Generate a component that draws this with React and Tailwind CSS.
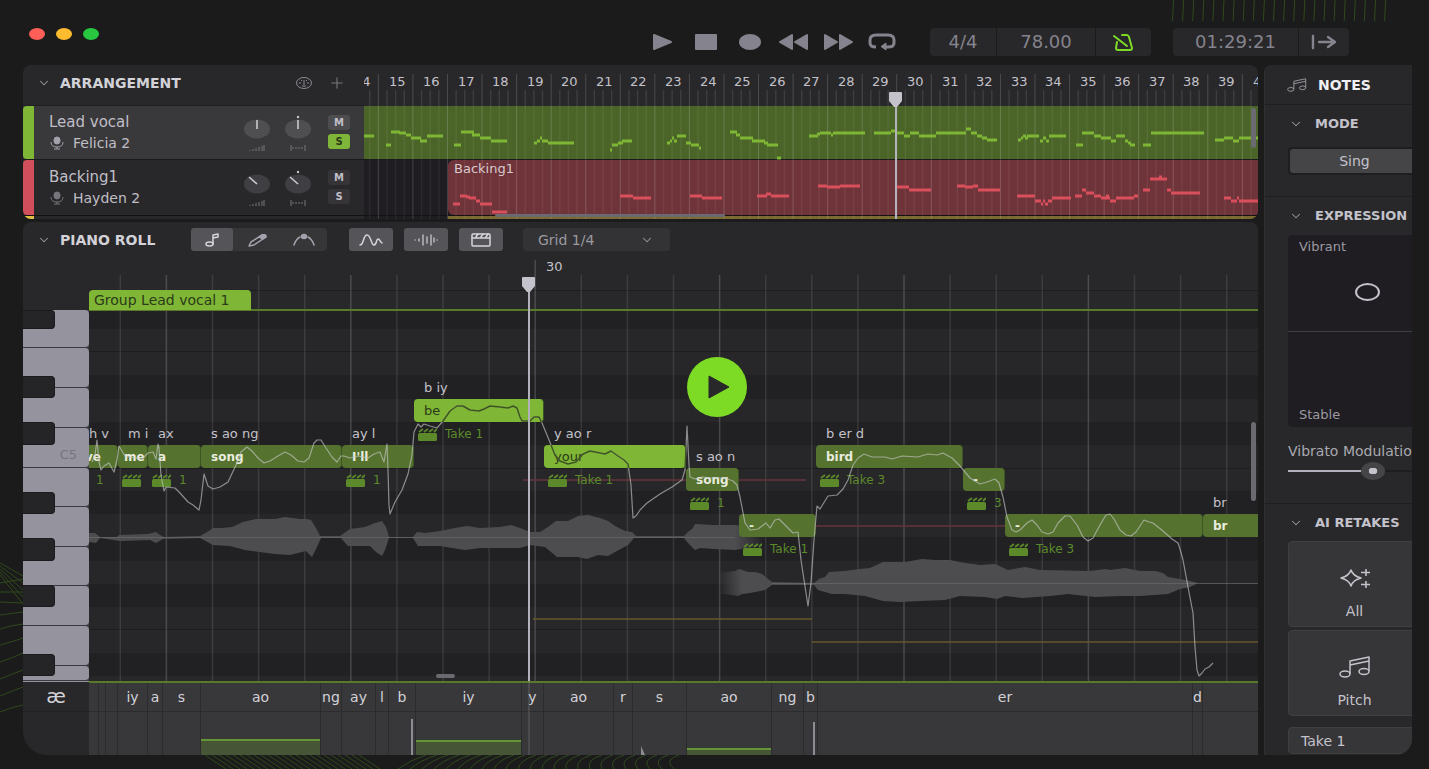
import { ChevronDown, Plus } from 'lucide-react'

const BARS = Array.from({ length: 27 }, (_, i) => 14 + i)
const BAR_WIDTH = 34.56
const BEAT_WIDTH = 46.1

const TRACKS = [
  { name: 'Lead vocal', singer: 'Felicia 2', color: 'bg-[#7fb635]', row: 'bg-[#39393b] h-[53px]', mic: '#a3a1ac', knob: '#4f4f52', dial: 0, solo: true },
  { name: 'Backing1', singer: 'Hayden 2', color: 'bg-[#d14f5c]', row: 'bg-[#28282a] h-[55px]', mic: '#77767c', knob: '#3f3e42', dial: -45, solo: false },
]

// [x from, x to, y]
const LEAD = [
  [364, 374, 136], [386, 391, 145], [391, 400, 132], [399, 406, 133], [406, 411, 135], [411, 421, 138], [420, 427, 141], [427, 443, 136],
  [454, 461, 145], [461, 474, 132], [472, 480, 135], [480, 491, 138], [491, 507, 141],
  [534, 537, 143], [537, 540, 141], [540, 542, 138], [542, 548, 141], [548, 574, 143],
  [610, 612, 150], [612, 618, 145], [618, 623, 143], [622, 632, 141],
  [667, 670, 143], [670, 672, 141], [672, 674, 138], [674, 677, 141], [677, 686, 136], [686, 691, 143], [691, 699, 145], [699, 701, 148],
  [730, 737, 132], [736, 740, 135], [740, 753, 138], [752, 765, 141], [764, 768, 143], [767, 778, 145], [777, 781, 158],
  [809, 818, 136], [817, 820, 134], [820, 831, 133], [831, 833, 135], [833, 865, 133],
  [874, 891, 133], [891, 896, 131], [896, 904, 133], [904, 910, 136], [910, 919, 133], [919, 936, 136], [936, 966, 133], [966, 971, 129], [971, 977, 133], [977, 982, 136], [982, 987, 138], [987, 997, 140],
  [1018, 1021, 140], [1021, 1023, 138], [1023, 1026, 136], [1025, 1028, 138], [1027, 1039, 136], [1040, 1043, 141], [1043, 1046, 138], [1046, 1049, 141], [1049, 1066, 136],
  [1076, 1083, 145], [1082, 1094, 133], [1094, 1101, 136], [1101, 1111, 138], [1111, 1116, 141], [1116, 1125, 136], [1125, 1128, 141], [1128, 1131, 143], [1130, 1135, 145],
  [1143, 1151, 145], [1151, 1204, 133], [1215, 1224, 140], [1224, 1233, 138], [1233, 1239, 141], [1239, 1260, 138],
]

const BACKING = [
  [453, 460, 204], [460, 467, 196], [466, 470, 197], [469, 476, 198], [476, 480, 201], [480, 492, 204], [492, 507, 212],
  [620, 633, 196], [633, 651, 198], [690, 702, 196], [702, 722, 198], [757, 767, 196], [766, 771, 194], [771, 789, 196],
  [818, 827, 186], [827, 840, 187], [840, 860, 186], [897, 909, 187], [909, 931, 190],
  [957, 965, 186], [965, 973, 187], [973, 978, 186], [978, 1000, 190],
  [1017, 1035, 196], [1035, 1041, 201], [1041, 1043, 204], [1043, 1045, 201], [1045, 1048, 204], [1048, 1052, 201], [1052, 1071, 198],
  [1075, 1082, 196], [1082, 1086, 190], [1086, 1094, 193], [1094, 1101, 196], [1101, 1110, 198], [1106, 1109, 196], [1110, 1116, 201], [1116, 1134, 198], [1134, 1138, 196],
  [1143, 1150, 190], [1150, 1167, 179], [1159, 1162, 177], [1167, 1171, 190], [1171, 1200, 193],
  [1224, 1231, 198], [1231, 1237, 201], [1237, 1239, 198], [1239, 1260, 201],
]

const segments = (list) => list.map(([a, b, y]) => `M${a} ${y}H${b}`).join('')

const NOTES = [
  { x: 0, y: 188, w: 29, word: 've', phones: 'h v', take: '1', edge: true },
  { x: 29, y: 188, w: 30, word: 'me', phones: 'm i', take: '' },
  { x: 59, y: 188, w: 53, word: 'a', phones: 'ax', take: '1' },
  { x: 112, y: 188, w: 141, word: 'song', phones: 's ao ng' },
  { x: 253, y: 188, w: 72, word: "I'll", phones: 'ay l', take: '1' },
  { x: 325, y: 142, w: 130, word: 'be', phones: 'b iy', take: 'Take 1', bright: true },
  { x: 455, y: 188, w: 142, word: 'your', phones: 'y ao r', take: 'Take 1', bright: true },
  { x: 597, y: 211, w: 53, word: 'song', phones: 's ao n', take: '1' },
  { x: 650, y: 257, w: 77, word: '-', phones: '', take: 'Take 1' },
  { x: 727, y: 188, w: 147, word: 'bird', phones: 'b er d', take: 'Take 3' },
  { x: 874, y: 211, w: 42, word: '-', phones: '', take: '3' },
  { x: 916, y: 257, w: 198, word: '-', phones: '', take: 'Take 3' },
  { x: 1114, y: 257, w: 60, word: 'br', phones: 'br' },
]

// phoneme cells: [width, label, level]
const PHONEMES = [
  [10, ''], [7, ''], [12, ''], [30, 'iy'], [15, 'a'], [38, 's'], [120, 'ao', 16], [21, 'ng'], [34, 'ay'], [13, 'l'], [27, 'b'],
  [106, 'iy', 15], [22, 'y'], [70, 'ao'], [19, 'r'], [54, 's'], [85, 'ao', 7], [32, 'ng'], [14, 'b'], [375, 'er'], [10, 'd'],
]

const BLACK_ROWS = [[310, 19], [375, 24], [422, 23], [491, 23], [537, 24], [584, 23], [653, 23]]
const WHITE_KEYS = [38, 40, 40, 40, 39, 40, 39, 40, 40, 15]
const BLACK_KEYS = [[0, 19], [66, 22], [112, 23], [182, 22], [228, 23], [275, 22], [344, 22]]

const PITCH =
  'M92 462L95 455 97 440 99 462 101 470 104 466 109 463 114 472 117 460 119 446 122 451 125 456 135 458 143 458 148 453 153 452 156 459 158 444 159 448 161 475 164 491 166 487 175 488 180 493 188 502 193 505 199 510 201 500 204 474 208 486 213 489 220 487 228 482 236 465 241 452 247 447 252 451 258 458 264 463 270 461 278 456 285 452 291 455 298 461 304 462 309 458 314 443 317 440 321 440 326 448 332 457 337 462 341 456 344 456 350 458 358 456 368 458 374 454 380 452 384 462 387 444 388 470 389 505 390 514 395 502 402 490 408 474 412 455 414 432 418 424 421 427 424 424 430 426 437 428 443 421 450 411 457 406 463 406 470 410 479 411 484 409 490 406 500 407 508 408 513 406 517 408 520 417 522 421 530 421 534 417 539 417 542 423 547 435 555 455 560 461 568 464 576 462 583 454 590 451 600 453 605 454 611 451 618 456 624 460 628 464 631 485 633 518 636 516 640 510 647 503 660 494 672 487 682 480 685 470 687 426 689 465 690 477 695 479 702 477 712 478 725 478 733 481 737 485 740 497 745 523 750 530 758 529 766 523 770 528 775 520 779 519 785 525 793 533 798 532 801 560 808 606 811 583 814 540 817 506 820 509 828 496 837 495 843 489 848 480 853 465 858 458 864 454 872 457 885 457 892 459 902 456 918 457 928 454 937 455 943 453 952 458 960 466 970 478 980 484 987 482 995 479 999 483 1003 497 1007 517 1012 530 1016 532 1020 530 1027 523 1032 520 1037 525 1042 532 1048 534 1053 532 1058 523 1065 516 1070 516 1077 525 1083 537 1088 541 1093 538 1100 525 1106 515 1110 514 1114 519 1120 530 1126 535 1131 536 1136 532 1144 520 1149 522 1153 523 1163 531 1172 539 1178 543 1180 549 1183 560 1188 587 1193 613 1195 647 1197 670 1199 676 1202 673 1205 669 1209 667 1213 663'

const WAVE_A =
  'M89 533L95 533 100 537 117 537 119 535 148 534 156 532 160 535 164 537 200 536 209 531 213 528 222 528 232 527 243 522 256 519 275 519 285 517 300 519 306 519 311 520 316 528 320 536 340 536 350 529 365 527 375 523 382 521 386 527 389 537 413 537 417 532 425 533 440 531 455 528 467 526 480 528 500 527 511 525 520 528 530 532 540 532 548 527 556 521 568 521 578 516 588 515 600 518 608 521 615 526 625 531 632 532 636 536 684 536 688 532 693 528 695 524 712 525 735 525 764 528 764 545 735 550 715 549 700 548 695 550 688 543 684 538 634 538 628 545 615 552 608 556 598 555 587 559 578 557 557 557 545 547 530 545 520 548 480 548 465 550 440 546 418 546 413 538 389 538 385 550 382 556 376 552 370 546 348 546 341 538 321 538 316 549 312 557 306 551 290 555 275 554 245 550 230 546 213 545 200 538 163 539 156 543 150 540 120 541 100 538 96 543 89 542Z'
const WAVE_B =
  'M718 573L735 571 739 569 748 572 755 572 762 574 768 579 772 582 814 583 819 579 825 577 829 572 845 571 860 569 870 568 883 562 905 562 922 559 935 560 950 560 965 563 980 565 995 564 1008 570 1025 567 1040 570 1090 571 1106 569 1110 570 1125 568 1140 571 1155 571 1163 573 1168 577 1180 579 1190 581 1198 583 1190 587 1180 589 1168 594 1140 596 1120 596 1095 597 1068 594 1050 596 1022 598 1005 596 997 599 985 597 960 596 945 600 920 601 900 602 883 601 865 596 845 594 832 594 825 592 818 590 814 585 772 585 765 590 750 593 742 594 738 596 725 594 718 594Z'

function Backdrop() {
  return (
    <svg className="pointer-events-none absolute bottom-0 left-0 h-[769px] w-[1429px]" viewBox="0 0 1429 769" fill="none" stroke="#2f4a1b" aria-hidden="true">
      {Array.from({ length: 22 }, (_, i) => (
        <path key={i} d={`M${1173.5 + i * 10.1} 0L${1172.5 + i * 10.1} 21`} />
      ))}
      {[563, 566, 569, 572, 575].map((y, i) => (
        <path key={y} d={`M0 ${y}L23 ${576 + i * 7}`} />
      ))}
      <path d="M0 583L23 579M0 592H23M0 602L23 603M0 615L23 612M0 629Q12 625 23 624M0 645Q12 642 23 638M0 662Q12 658 23 653M0 679Q12 674 23 670M0 696Q12 691 23 687M0 712Q12 707 23 705" />
      {Array.from({ length: 23 }, (_, i) => (
        <path key={i} d={`M${205 + i * 7} 755L${226 + i * 7} 769`} />
      ))}
      {Array.from({ length: 24 }, (_, i) => (
        <path key={i} d={`M${426 + i * 11} 755Q${410 + i * 11} 760 ${398 + i * 12} 769`} />
      ))}
    </svg>
  )
}

function TransportButton({ label, children }) {
  return (
    <button aria-label={label} className="flex h-7 w-11 items-center justify-center">
      <svg viewBox="0 0 30 18" className="h-[18px] w-[30px] text-[#85838d]" fill="currentColor" stroke="currentColor" strokeWidth="2" strokeLinejoin="round">
        {children}
      </svg>
    </button>
  )
}

function TopBar() {
  return (
    <header className="flex h-[65px] items-start pr-20 pl-[29px]">
      <div className="flex gap-[11px] pt-7">
        <span className="h-3 w-4 rounded-[50%] bg-[#ff5f57]" />
        <span className="h-3 w-4 rounded-[50%] bg-[#febc2e]" />
        <span className="h-3 w-4 rounded-[50%] bg-[#28c840]" />
      </div>
      <div className="ml-auto flex items-center pt-7">
        <TransportButton label="Play"><path d="M7 2v14l17-7z" /></TransportButton>
        <TransportButton label="Stop"><rect x="5" y="2" width="20" height="14" /></TransportButton>
        <TransportButton label="Record"><ellipse cx="15" cy="9" rx="10" ry="7" /></TransportButton>
        <TransportButton label="Rewind"><path d="M13 2v14L1 9zM28 2v14L16 9z" /></TransportButton>
        <TransportButton label="Fast forward"><path d="M2 2v14l12-7zM17 2v14l12-7z" /></TransportButton>
        <TransportButton label="Loop">
          <path d="M9 14Q3 14 3 10V7q0-5 6-5h12q6 0 6 5v3q0 4-6 4h-2" fill="none" strokeWidth="3" />
          <path d="M14 13.500l5-3.500v7z" strokeWidth="1" />
        </TransportButton>
        <div className="ml-[26px] flex h-7 divide-x divide-[#1b1b1b] overflow-hidden rounded bg-[#28282a] text-lg text-[#85838d]">
          <span className="flex w-[67px] items-center justify-center">4/4</span>
          <span className="flex w-[99px] items-center justify-center">78.00</span>
          <button aria-label="Metronome" className="flex w-[55px] items-center justify-center">
            <svg viewBox="0 0 21 17" className="h-[17px] w-[21px]" fill="none" stroke="#7ddb26" strokeWidth="2" strokeLinejoin="round" strokeLinecap="round">
              <path d="M9 1h5q1 0 2 2l3 11q0 2-2 2H5q-2 0-2-2l1-6M1 2l13 10" />
            </svg>
          </button>
        </div>
        <div className="ml-[22px] flex h-7 divide-x divide-[#1b1b1b] overflow-hidden rounded bg-[#28282a] text-lg text-[#85838d]">
          <span className="flex w-[126px] items-center justify-center">01:29:21</span>
          <button aria-label="Go to end" className="flex w-[50px] items-center justify-center">
            <svg viewBox="0 0 26 16" className="h-4 w-[26px]" fill="none" stroke="currentColor" strokeWidth="2.4" strokeLinecap="round" strokeLinejoin="round">
              <path d="M2 2v12M8 8h16M17 3l7 5-7 5" />
            </svg>
          </button>
        </div>
      </div>
    </header>
  )
}

function Chevron() {
  return (
    <ChevronDown className="h-3.5 w-3.5 shrink-0 text-[#9b9aa1]" strokeWidth={1.75} />
  )
}

function Playhead({ className }) {
  return (
    <div className={`pointer-events-none absolute flex w-[13px] flex-col items-center ${className}`}>
      <svg viewBox="0 0 13 15" className="h-[15px] w-[13px] shrink-0" fill="#c4c2cb">
        <path d="M1 0h11q1 0 1 1v8l-5 6H5L0 9V1q0-1 1-1z" />
      </svg>
      <span className="w-0.5 flex-1 bg-[#b3b1bb]" />
    </div>
  )
}

function Knob({ track, dotted }) {
  return (
    <svg viewBox="0 0 28 38" className="h-[38px] w-7" fill="none">
      <ellipse cx="14" cy="15" rx="13" ry="9.5" fill={track.knob} />
      <path d={track.dial ? 'M6 8l8 7' : 'M14 6v9'} stroke="#c9c8cf" strokeWidth="1.6" />
      {dotted && <circle cx="14" cy="3" r="1.2" fill="#c9c8cf" />}
      {dotted ? (
        <path d="M7 31v6M9 33v2M12 33v2M15 33v2M18 33v2M21 31v6" stroke="#77767c" />
      ) : (
        <path d="M7 36v1M10 35v2M13 34v3M16 33v4M19 32v5M21 31v6" stroke="#77767c" />
      )}
    </svg>
  )
}

function TrackRow({ track }) {
  return (
    <div className={`flex items-center ${track.row}`}>
      <span className={`w-[11px] shrink-0 self-stretch rounded-l ${track.color}`} />
      <div className="flex-1 pb-0.5 pl-[15px] text-[#c0bec7]">
        <p className="text-[15px] leading-[22px]">{track.name}</p>
        <p className="flex items-center gap-2 text-sm leading-5">
          <svg viewBox="0 0 16 14" className="h-3.5 w-4" fill={track.mic} stroke={track.mic}>
            <rect x="5" y="1" width="6" height="7" rx="3" />
            <path d="M2 6q0 5 6 5t6-5M8 11v2M5 13h6" fill="none" />
          </svg>
          {track.singer}
        </p>
      </div>
      <div className="flex gap-[13px]">
        <Knob track={track} />
        <Knob track={track} dotted />
      </div>
      <div className="flex flex-col gap-1 pr-3.5 pb-0.5 pl-4 text-[10px] leading-[15px] font-bold text-[#c0bec7]">
        <button className={`h-[15px] w-[22px] rounded-[3px] ${track.solo ? 'bg-[#4d4d50]' : 'bg-[#363437]'}`}>M</button>
        <button className={`h-[15px] w-[22px] rounded-[3px] ${track.solo ? 'bg-[#7fb63a] text-[#2b3a18]' : 'bg-[#363437]'}`}>S</button>
      </div>
    </div>
  )
}

function Arrangement() {
  return (
    <section className="flex overflow-hidden rounded-lg bg-[#28282a]">
      <div className="w-[341px] shrink-0">
        <div className="flex h-[41px] items-center border-b border-[#1e1e20] pr-[18px] pb-1 pl-3.5">
          <Chevron />
          <h2 className="ml-[9px] text-sm font-bold text-[#d3d2d8]">ARRANGEMENT</h2>
          <button aria-label="Meter" className="ml-auto">
            <svg viewBox="0 0 18 14" className="h-3.5 w-[18px]" fill="none" stroke="#8b8a91">
              <ellipse cx="9" cy="7" rx="7.5" ry="5.5" />
              <path d="M9 4v5M7 10h4M4 7h2M12 7h2M6 4l1 1M12 4l-1 1" />
            </svg>
          </button>
          <button aria-label="Add track" className="ml-[15px]">
            <Plus className="h-[18px] w-[18px] text-[#77767c]" strokeWidth={1.5} />
          </button>
        </div>
        <TrackRow track={TRACKS[0]} />
        <div className="border-t border-[#1a1a1c]">
          <TrackRow track={TRACKS[1]} />
        </div>
        <div className="h-1 border-t border-[#111]">
          <div className="h-[3px] w-[11px] rounded-l bg-[#e0c040]" />
        </div>
      </div>

      <div className="relative min-w-0 flex-1 overflow-hidden">
        <div className="relative h-[41px] text-[13px] text-[#c4c2cb]">
          {BARS.map((bar, i) => (
            <span key={bar} className="absolute top-[7px] leading-5" style={{ left: Math.round(-10 + i * BAR_WIDTH) }}>
              {bar}
            </span>
          ))}
        </div>
        <div className="h-[53px] bg-[#4b6529]" />
        <div className="flex h-[56px] border-t border-[#1a1a1c] bg-[#1f1c22] pl-[84px]">
          <div className="flex-1 rounded-l-md bg-[#6f343a] px-1.5 text-[13px] leading-[18px] text-[#d9c9cd]">Backing1</div>
        </div>
        <div className="flex h-1 border-t border-[#111] bg-[#1f1c22] pl-[84px]">
          <div className="flex-1 bg-[#7a6930]" />
        </div>
        <svg className="pointer-events-none absolute top-0 left-0 h-[154px] w-[895px]" viewBox="364 65 895 154" fill="none" aria-hidden="true">
          {BARS.map((bar, i) => {
            const x = 343.8 + i * BAR_WIDTH
            return (
              <g key={bar} stroke="#fff">
                <path d={`M${x} 74V219`} strokeOpacity="0.17" />
                {[1, 2, 3].map((n) => (
                  <path key={n} d={`M${x + n * 8.64} 90V106`} strokeOpacity="0.1" strokeWidth="1.4" />
                ))}
                {[1, 2, 3].map((n) => (
                  <path key={n} d={`M${x + n * 8.64} 106V219`} strokeOpacity="0.06" strokeWidth="1.4" />
                ))}
              </g>
            )
          })}
          <path d={segments(LEAD)} stroke="#7fb635" strokeWidth="2.8" />
          <path d={segments(BACKING)} stroke="#d94f5c" strokeWidth="2.8" />
        </svg>
        <span className="absolute bottom-0.5 left-[131px] h-[3px] w-[230px] rounded bg-[#6b6a70]" />
        <span className="absolute top-[43px] right-0.5 h-10 w-[5px] rounded bg-[#6b6a70]" />
        <Playhead className="top-[27px] bottom-0 left-[525px]" />
      </div>
    </section>
  )
}

function ToolButton({ label, active, wide, children }) {
  return (
    <button aria-label={label} className={`flex h-[23px] items-center justify-center rounded-[3px] ${wide} ${active ? 'bg-[#555458]' : ''}`}>
      <svg viewBox="0 0 26 16" className="h-4 w-[26px]" fill="none" stroke="#d6d5db" strokeWidth="1.5" strokeLinecap="round" strokeLinejoin="round">
        {children}
      </svg>
    </button>
  )
}

function PianoToolbar() {
  return (
    <div className="flex h-[35px] items-center pl-3.5">
      <Chevron />
      <h2 className="ml-[9px] w-[131px] text-sm font-bold text-[#d3d2d8]">PIANO ROLL</h2>
      <div className="flex rounded bg-[#363638]">
        <ToolButton label="Notes tool" active wide="w-[42px]">
          <path d="M14 12V3l5-1v3l-5 1" />
          <ellipse cx="10.500" cy="12" rx="3.500" ry="2" />
        </ToolButton>
        <ToolButton label="Pencil tool" wide="w-[47px]">
          <path d="M5 14l2-4L18 3q4-1 4 2L10 13z" stroke="#a3a1ac" />
          <path d="M15 5l3-2q4-1 4 2l-3 2z" fill="#a3a1ac" stroke="#a3a1ac" />
        </ToolButton>
        <ToolButton label="Curve tool" wide="w-[47px]">
          <path d="M3 13q2-6 6-8M17 5q4 2 6 8" stroke="#a3a1ac" />
          <ellipse cx="13" cy="4.500" rx="2.500" ry="2" fill="#a3a1ac" stroke="#a3a1ac" />
        </ToolButton>
      </div>
      <div className="ml-[22px] flex gap-[11px]">
        <ToolButton label="Pitch" active wide="w-11">
          <path d="M2 13C6 13 5 3 9 3s4 10 7 10 2-6 4-6 2 3 4 4" />
        </ToolButton>
        <ToolButton label="Waveform" active wide="w-11">
          <path d="M2 8h.1M6 7v2M10 3v10M14 5v6M18 3v10M21 6v4M24 8h.1" stroke="#b8b7be" />
        </ToolButton>
        <ToolButton label="Takes" active wide="w-11">
          <rect x="4" y="2" width="18" height="12" rx="1" />
          <path d="M4 6h18M8 5l2-3M13 5l2-3M18 5l2-3" />
        </ToolButton>
      </div>
      <label className="relative ml-5 flex h-[23px] w-[147px] items-center rounded bg-[#333335] text-sm text-[#9b9aa1]">
        <select aria-label="Grid" className="h-full w-full appearance-none bg-transparent pl-[15px] outline-none">
          <option>Grid 1/4</option>
        </select>
        <span className="pointer-events-none absolute right-4"><Chevron /></span>
      </label>
    </div>
  )
}

function Clapper() {
  return (
    <svg viewBox="0 0 19 13" className="h-[13px] w-[19px] shrink-0" aria-hidden="true">
      <rect x="0" y="5" width="19" height="8" rx="1.500" fill="#5c8a2b" />
      <path d="M1 4l4-3M6 4l4-3M11 4l4-3M16 4l3-3" stroke="#5c8a2b" strokeWidth="1.800" />
    </svg>
  )
}

function Note({ note }) {
  return (
    <div className="absolute" style={{ left: note.x, top: note.y, width: note.w }}>
      <span className={`absolute -top-[21px] text-[13px] leading-5 whitespace-nowrap text-[#c4c2cb] ${note.edge ? 'left-0' : 'left-2.5'}`}>{note.phones}</span>
      <div
        className={`flex h-[23px] items-center rounded border-r border-[#3d5522] text-xs ${note.edge ? '-ml-1' : note.w === 30 ? 'pl-1.5' : 'pl-2.5'} ${
          note.bright ? 'bg-[#7fb635] text-[13px] text-[#2b3a18]' : 'bg-[#55732e] font-bold text-[#e9ecdf]'
        }`}
      >
        {note.word}
      </div>
      {note.take !== undefined && (
        <div className={`absolute top-[25px] flex min-h-5 items-center gap-2 text-xs leading-5 whitespace-nowrap text-[#5c8a2b] ${note.edge ? 'left-[7px]' : 'left-1'}`}>
          {!note.edge && <Clapper />}
          {note.take}
        </div>
      )}
    </div>
  )
}

function Keyboard() {
  return (
    <div className="relative mt-[53px] h-[371px] w-[66px] shrink-0 overflow-hidden bg-[#3a393e]">
      {WHITE_KEYS.map((h, i) => (
        <div key={i} className="flex items-end justify-end rounded-r border-b border-[#3a393e] bg-[#95939e] pr-3 text-[13px] leading-6 text-[#77757f]" style={{ height: h }}>
          {i === 3 && 'C5'}
        </div>
      ))}
      {BLACK_KEYS.map(([top, h]) => (
        <span key={top} className="absolute left-0 w-8 rounded-r border-y border-r border-[#1b1b1d] bg-[#252527]" style={{ top, height: h }} />
      ))}
    </div>
  )
}

function RollCanvas() {
  return (
    <div className="relative h-[424px] min-w-0 flex-1 overflow-hidden">
      <svg className="absolute top-0 left-0 h-[424px] w-[1170px]" viewBox="89 257 1170 424" fill="none" aria-hidden="true">
        <rect x="89" y="310" width="1170" height="371" fill="#272729" />
        {BLACK_ROWS.map(([y, h]) => (
          <rect key={y} x="89" y={y} width="1170" height={h} fill="#212123" />
        ))}
        <path d="M89 290.500H1259M89 351.500H1259M89 468.500H1259M89 629.500H1259" stroke="#1d1d1f" />
        {Array.from({ length: 25 }, (_, i) => (
          <path key={i} d={`M${120.3 + i * BEAT_WIDTH} ${i === 9 ? 260 : 275}V681`} stroke="#fff" strokeOpacity={i % 4 === 1 ? 0.17 : 0.1} strokeWidth="1.500" />
        ))}
        <defs>
          <linearGradient id="fade-out" gradientUnits="userSpaceOnUse" x1="735" x2="764" y1="0" y2="0">
            <stop stopColor="#4d4d4f" />
            <stop offset="1" stopColor="#4d4d4f" stopOpacity="0" />
          </linearGradient>
          <linearGradient id="fade-in" gradientUnits="userSpaceOnUse" x1="718" x2="742" y1="0" y2="0">
            <stop stopColor="#4d4d4f" stopOpacity="0" />
            <stop offset="1" stopColor="#4d4d4f" />
          </linearGradient>
        </defs>
        <path d={WAVE_A} fill="url(#fade-out)" />
        <path d={WAVE_B} fill="url(#fade-in)" />
        <path d="M89 537.500H735M772 583.500H1259" stroke="#69696c" strokeOpacity="0.7" />
        <path d="M523 480H806M816 526H1005" stroke="#66343b" strokeWidth="1.500" />
        <path d="M533 619H812M812 642H1259" stroke="#655828" strokeWidth="1.500" />
        <path d="M89 310H1259" stroke="#587a2a" strokeWidth="2" />
      </svg>
      <div className="absolute top-[33px] left-0 flex h-5 w-[162px] items-center rounded-t bg-[#7fb635] pl-[5px] text-sm whitespace-nowrap text-[#2b3a18]">
        Group Lead vocal 1
      </div>
      <span className="absolute top-0 left-[457px] text-[13px] leading-5 text-[#c4c2cb]">30</span>
      {NOTES.map((note) => (
        <Note key={note.x} note={note} />
      ))}
      <svg className="pointer-events-none absolute top-0 left-0 h-[424px] w-[1170px]" viewBox="89 257 1170 424" fill="none" strokeLinejoin="round" aria-hidden="true">
        <clipPath id="selected-notes">
          <rect x="414" y="399" width="130" height="23" />
          <rect x="544" y="445" width="142" height="23" />
        </clipPath>
        <path d={PITCH} stroke="#c4c4c6" strokeOpacity="0.65" strokeWidth="1.200" />
        <path d={PITCH} stroke="#3b5420" strokeWidth="1.500" clipPath="url(#selected-notes)" />
      </svg>
      <span className="absolute bottom-[3px] left-[347px] h-1 w-[19px] rounded bg-[#6b6a70]" />
      <span className="absolute top-[165px] right-0.5 h-[79px] w-[5px] rounded bg-[#6b6a70]" />
      <Playhead className="top-5 bottom-0 left-[433px]" />
    </div>
  )
}

function Phonemes() {
  return (
    <div className="relative flex h-[74px]">
      <div className="w-[66px] shrink-0 border-t border-[#95939e] text-center text-xl text-[#d3d2d8]">
        <div className="h-[30px] border-b border-[#212123] leading-7">æ</div>
      </div>
      <div className="relative flex min-w-0 flex-1 overflow-hidden border-t-2 border-[#587a2a] bg-[#38383a] text-sm text-[#d3d2d8]">
        {PHONEMES.map(([width, label, level], i) => (
          <div key={i} className="flex shrink-0 flex-col border-r border-[#2c2c2e]" style={{ width }}>
            <span className="flex h-[29px] items-center justify-center border-b border-[#2c2c2e]">{label}</span>
            {level && <span className="mt-auto border-t-2 border-[#649636] bg-[#475537]" style={{ height: level }} />}
          </div>
        ))}
        <div className="flex-1"><span className="block h-[29px] border-b border-[#2c2c2e]" /></div>
        <svg className="pointer-events-none absolute bottom-0 left-0 h-[37px] w-[760px]" viewBox="89 718 760 37" fill="#8d8c93" aria-hidden="true">
          <path d="M411 719h2v36h-2zM813 722h2v33h-2zM641 755v-9l4 9z" />
        </svg>
      </div>
      <span className="absolute top-0 bottom-0 left-[505px] w-0.5 bg-white/10" />
    </div>
  )
}

function MusicIcon({ className }) {
  return (
    <svg viewBox="0 0 32 22" className={className} fill="none" stroke="currentColor" strokeWidth="1.500" strokeLinejoin="round">
      <ellipse cx="6" cy="18" rx="5" ry="3" />
      <ellipse cx="25" cy="15.500" rx="5" ry="3" />
      <path d="M11 18V5l19-4v14M11 9l19-4" />
    </svg>
  )
}

function PanelTitle({ children }) {
  return (
    <h3 className="flex items-center gap-3 pl-px text-[13px] leading-5 font-bold text-[#c4c2cb]">
      <Chevron />
      {children}
    </h3>
  )
}

function NotesPanel() {
  return (
    <aside className="w-[148px] shrink-0 overflow-hidden rounded-tl-lg rounded-br-2xl border-l border-[#303032] bg-[#28282a] whitespace-nowrap">
      <div className="w-[156px]">
        <div className="flex h-10 items-center gap-[11px] border-b border-[#1e1e20] pl-[22px] text-[#9b9aa1]">
          <MusicIcon className="h-[14px] w-[20px]" />
          <h2 className="text-sm font-bold text-[#f0eff3]">NOTES</h2>
        </div>
        <div className="h-[92px] border-b border-[#1e1e20] pt-[9px] pl-[23px]">
          <PanelTitle>MODE</PanelTitle>
          <div className="mt-[13px] rounded bg-[#1e1e20] p-0.5">
            <button className="h-6 w-full rounded-[3px] bg-[#454547] text-sm text-[#c4c2cb]">Sing</button>
          </div>
        </div>
        <div className="h-[307px] border-b border-[#1e1e20] pt-[9px] pl-[23px]">
          <PanelTitle>EXPRESSION</PanelTitle>
          <div className="relative mt-[9px] flex h-48 flex-col rounded bg-[#1f1c22] text-[13px] leading-5 text-[#9b9aa1]">
            <span className="h-[97px] border-b border-[#3f3e42] pt-0.5 pl-[11px]">Vibrant</span>
            <span className="mt-auto pb-0.5 pl-[11px]">Stable</span>
            <button aria-label="Expression" className="absolute top-12 left-[67px] h-[18px] w-[25px] rounded-[50%] border-2 border-[#c4c2cb]" />
          </div>
          <label htmlFor="vibrato" className="mt-3.5 block text-sm leading-5 text-[#a9a8af]">Vibrato Modulation</label>
          <input
            id="vibrato"
            type="range"
            defaultValue="67"
            className="block h-5 w-full appearance-none bg-[linear-gradient(to_right,#b3b1bb_60%,#1e1e20_60%)] bg-[length:100%_2px] bg-center bg-no-repeat [&::-webkit-slider-thumb]:h-[18px] [&::-webkit-slider-thumb]:w-6 [&::-webkit-slider-thumb]:appearance-none [&::-webkit-slider-thumb]:rounded-[50%] [&::-webkit-slider-thumb]:bg-[radial-gradient(ellipse,#c4c2cb_24%,#454547_27%)]"
          />
        </div>
        <div className="pt-[9px] pl-[23px]">
          <PanelTitle>AI RETAKES</PanelTitle>
          <div className="mt-2 flex flex-col gap-[3px] text-[#c4c2cb]">
            <button className="flex h-[86px] flex-col items-center justify-end gap-3 rounded border border-[#3f3f42] bg-[#363638] pb-[5px] text-sm leading-5">
              <svg viewBox="0 0 32 22" className="h-[22px] w-8" fill="none" stroke="currentColor" strokeWidth="1.600" strokeLinejoin="round">
                <path d="M12 3q2 6 10 8-8 2-10 8-2-6-10-8 8-2 10-8zM27 2v7M22 5.500h9M27 14v7M22 17.500h9" />
              </svg>
              All
            </button>
            <button className="flex h-[86px] flex-col items-center justify-end gap-3 rounded border border-[#3f3f42] bg-[#363638] pb-[5px] text-sm leading-5">
              <MusicIcon className="h-[22px] w-8" />
              Pitch
            </button>
          </div>
          <button className="mt-[11px] block h-[27px] w-full rounded border border-[#3f3f42] bg-[#363638] pl-3 text-left text-sm text-[#c4c2cb]">Take 1</button>
        </div>
      </div>
    </aside>
  )
}

export default function App() {
  return (
    <div className="relative min-h-screen overflow-hidden bg-[#1b1b1b] font-['DejaVu_Sans',sans-serif]">
      <Backdrop />
      <div className="relative">
        <TopBar />
        <main className="flex gap-1.5 pr-[17px] pb-3.5 pl-[23px]">
          <div className="flex min-w-0 flex-1 flex-col gap-[3px]">
            <Arrangement />
            <section className="overflow-hidden rounded-t-lg rounded-bl-3xl bg-[#28282a]">
              <PianoToolbar />
              <div className="flex">
                <Keyboard />
                <RollCanvas />
              </div>
              <Phonemes />
            </section>
          </div>
          <NotesPanel />
        </main>
      </div>
      <div className="pointer-events-none absolute inset-0 flex items-center justify-center pt-1 pl-1">
        <button aria-label="Play video" className="pointer-events-auto flex h-[60px] w-[60px] items-center justify-center rounded-full bg-[#7ddb26]">
          <svg viewBox="0 0 22 24" className="ml-1 h-6 w-[22px]" fill="#28282a" stroke="#28282a" strokeLinejoin="round">
            <path d="M1 1v22l20-11z" />
          </svg>
        </button>
      </div>
    </div>
  )
}
